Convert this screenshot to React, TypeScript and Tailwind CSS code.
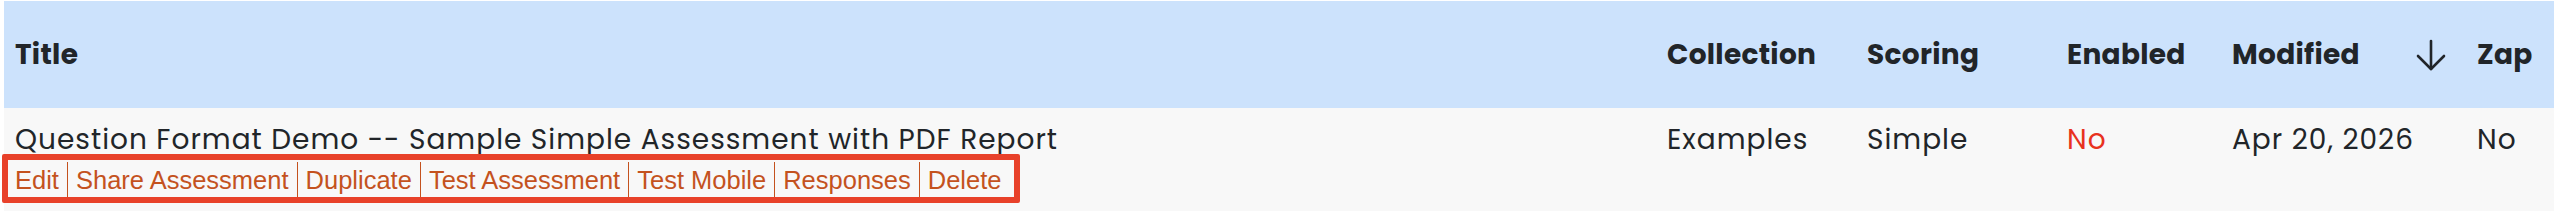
import React from "react";

const head = "font-['Poppins','Open_Sans',sans-serif] font-bold text-[28px] tracking-[0.3px] text-[#212529]";
const cell = "font-['Poppins','Open_Sans',sans-serif] text-[28px] tracking-[1px] leading-[36px] text-[#212529]";

const actions = ["Edit", "Share Assessment", "Duplicate", "Test Assessment", "Test Mobile", "Responses", "Delete"];

export default function App() {
  return (
    <div className="bg-white w-[2560px] h-[217px] pt-px pl-1">
      <div className="w-[2550px]">
        <div className="grid grid-cols-[1652px_200px_200px_165px_245px_88px] h-[107px] bg-[#cce2fc] items-center">
          <div className={`pl-[11px] ${head}`}>Title</div>
          <div className={`pl-[11px] ${head}`}>Collection</div>
          <div className={`pl-[11px] ${head}`}>Scoring</div>
          <div className={`pl-[11px] ${head}`}>Enabled</div>
          <div className={`pl-[11px] pr-[19px] flex items-center justify-between ${head}`}>
            <span>Modified</span>
            <svg width="32" height="32" viewBox="0 0 32 32" fill="none" stroke="#212529" strokeWidth="2.6" strokeLinecap="round" strokeLinejoin="round">
              <path d="M16 2v28" />
              <path d="M3 17l13 13 13-13" />
            </svg>
          </div>
          <div className={`pl-[11px] ${head}`}>Zap</div>
        </div>
        <div className="grid grid-cols-[1652px_200px_200px_165px_245px_88px] h-[103px] bg-[#f8f8f8]">
          <div className="pl-[11px] pt-[14px]">
            <div className={cell}>Question Format Demo -- Sample Simple Assessment with PDF Report</div>
            <div className="relative mt-1 -ml-2 w-fit">
              <div className="flex">
                {actions.map((a, i) => (
                  <span
                    key={a}
                    className={`px-2 h-[38px] flex items-center font-['Liberation_Sans',Arial,sans-serif] text-[25.5px] leading-none text-[#c4521e] ${i < actions.length - 1 ? "border-r border-[#c4521e]" : ""}`}
                  >
                    {a}
                  </span>
                ))}
              </div>
              <div className="absolute -left-[5px] -top-[8px] -bottom-[3px] -right-[11px] border-[6px] border-[#e8412a] rounded-[2px] pointer-events-none" />
            </div>
          </div>
          <div className={`pl-[11px] pt-[14px] ${cell}`}>Examples</div>
          <div className={`pl-[11px] pt-[14px] ${cell}`}>Simple</div>
          <div className={`pl-[11px] pt-[14px] ${cell} text-[#e8321e]`}>No</div>
          <div className={`pl-[11px] pt-[14px] ${cell}`}>Apr 20, 2026</div>
          <div className={`pl-[11px] pt-[14px] ${cell}`}>No</div>
        </div>
      </div>
    </div>
  );
}
